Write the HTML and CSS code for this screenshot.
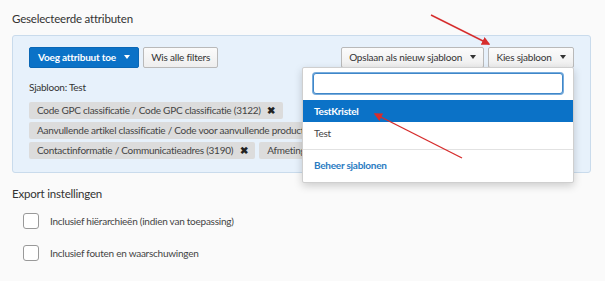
FILE: index.html
```html
<!DOCTYPE html>
<html lang="nl">
<head>
<meta charset="UTF-8">
<title>Export</title>
<link rel="stylesheet" href="styles.css">
</head>
<body>
	<div class="page">
		<h3 class="section-title">Geselecteerde attributen</h3>
		<div class="panel">
			<div class="toolbar">
				<div class="group">
					<button class="btn btn-primary">Voeg attribuut toe <span class="caret"></span></button>
					<button class="btn">Wis alle filters</button>
				</div>
				<div class="group group-right">
					<button class="btn">Opslaan als nieuw sjabloon <span class="caret"></span></button>
					<div class="dropdown">
						<button class="btn">Kies sjabloon <span class="caret"></span></button>
						<div class="menu">
							<div class="menu-search"><input type="text"></div>
							<div class="menu-item active">TestKristel</div>
							<div class="menu-item">Test</div>
							<div class="divider"></div>
							<div class="menu-item link">Beheer sjablonen</div>
						</div>
					</div>
				</div>
			</div>
			<div class="template">Sjabloon: Test</div>
			<div class="tags">
				<span class="tag">Code GPC classificatie / Code GPC classificatie (3122) <b>&#10006;</b></span>
				<span class="tag">Aanvullende artikel classificatie / Code voor aanvullende productclassificatie (3123) <b>&#10006;</b></span>
				<span class="tag">Contactinformatie / Communicatieadres (3190) <b>&#10006;</b></span>
				<span class="tag">Afmetingen / Hoogte (3201) <b>&#10006;</b></span>
			</div>
		</div>
		<h3 class="section-title export">Export instellingen</h3>
		<label class="check"><span class="box"></span>Inclusief hiërarchieën (indien van toepassing)</label>
		<label class="check"><span class="box"></span>Inclusief fouten en waarschuwingen</label>
	</div>
	<svg class="arrows" width="605" height="281" viewBox="0 0 605 281">
		<defs>
			<marker id="head" markerWidth="6" markerHeight="6" refX="5" refY="3" orient="auto">
				<path d="M0,0 L6,3 L0,6 Z" fill="#d62d2d"/>
			</marker>
		</defs>
		<line x1="431" y1="15" x2="489" y2="44" stroke="#d62d2d" stroke-width="1.4" marker-end="url(#head)"/>
		<line x1="462" y1="158" x2="375" y2="114" stroke="#d62d2d" stroke-width="1.4" marker-end="url(#head)"/>
	</svg>
</body>
</html>
```
FILE: styles.css
```css
html,body{margin: 0;background: #fafafa;}
body{
	width: 605px;
	height: 281px;
	overflow: hidden;
	position: relative;
	font-family: Lato, "Noto Sans", sans-serif;
	font-size: 10px;
	letter-spacing: -0.25px;
	color: #333;
}
.page{padding: 10px 14px 0 12px;}
.section-title{
	margin: 0 0 8px 0;
	font-size: 11.5px;
	letter-spacing: -0.2px;
	font-weight: normal;
	color: #333;
	line-height: 17px;
}
.panel{
	position: relative;
	background: #e7f1fb;
	border: 1px solid #c9dbec;
	border-radius: 3px;
	padding: 11px 16px 11px 16px;
	height: 114px;
}
.toolbar{display: flex;}
.group{display: flex;gap: 4px;}
.group-right{margin-left: auto;}
.btn{
	font-family: inherit;
	font-size: 10px;
	letter-spacing: -0.2px;
	height: 21px;
	padding: 0 7px;
	border: 1px solid #b9b9b9;
	border-radius: 2px;
	background: linear-gradient(#fbfbfb, #eeeeee);
	color: #333;
	line-height: 19px;
	white-space: nowrap;
}
.btn-primary{
	background: #0b72c7;
	border-color: #0a67b5;
	color: #fff;
	font-weight: 700;
	padding: 0 8px 0 8px;
}
.caret{
	display: inline-block;
	width: 0;
	height: 0;
	margin-left: 6px;
	vertical-align: 2px;
	border-left: 3px solid transparent;
	border-right: 3px solid transparent;
	border-top: 4px solid currentColor;
}
.dropdown{position: relative;}
.menu{
	position: absolute;
	right: 0;
	top: 20px;
	width: 270px;
	background: #fff;
	border: 1px solid #cfcfcf;
	border-radius: 2px;
	box-shadow: 0 3px 8px rgba(0,0,0,.18);
	padding: 5px 0 6px 0;
	z-index: 2;
}
.menu-search{padding: 0 10px 6px 10px;}
.menu-search input{
	box-sizing: border-box;
	width: 100%;
	height: 21px;
	border: 1px solid #3f87c9;
	box-shadow: 0 0 0 1px #78acdc;
	border-radius: 3px;
	outline: none;
}
.menu-item{
	padding: 0 11px;
	height: 22px;
	line-height: 22px;
	color: #444;
}
.menu-item.active{background: #0b72c7;color: #fff;font-weight: 700;}
.divider{border-top: 1px solid #e2e2e2;margin: 5px 0 4px 0;}
.menu-item.link{color: #2a7bc2;font-weight: 700;}
.template{margin: 11px 0 7px 0;line-height: 16px;}
.tags{display: flex;flex-wrap: wrap;gap: 3px 4px;width: 545px;}
.tag{
	background: #dcdcdc;
	border-radius: 2px;
	padding: 0 8px;
	line-height: 17px;
	white-space: nowrap;
	color: #444;
}
.tag b{margin-left: 4px;font-size: 10px;color: #222;}
.export{margin: 12px 0 11px 0;}
.check{
	display: flex;
	align-items: center;
	margin: 0 0 16px 11px;
	color: #444;
	line-height: 16px;
}
.box{
	width: 14px;
	height: 14px;
	border: 1px solid #999;
	border-radius: 3px;
	background: #fff;
	margin-right: 11px;
}
.arrows{position: absolute;left: 0;top: 0;pointer-events: none;z-index: 5;}
```
